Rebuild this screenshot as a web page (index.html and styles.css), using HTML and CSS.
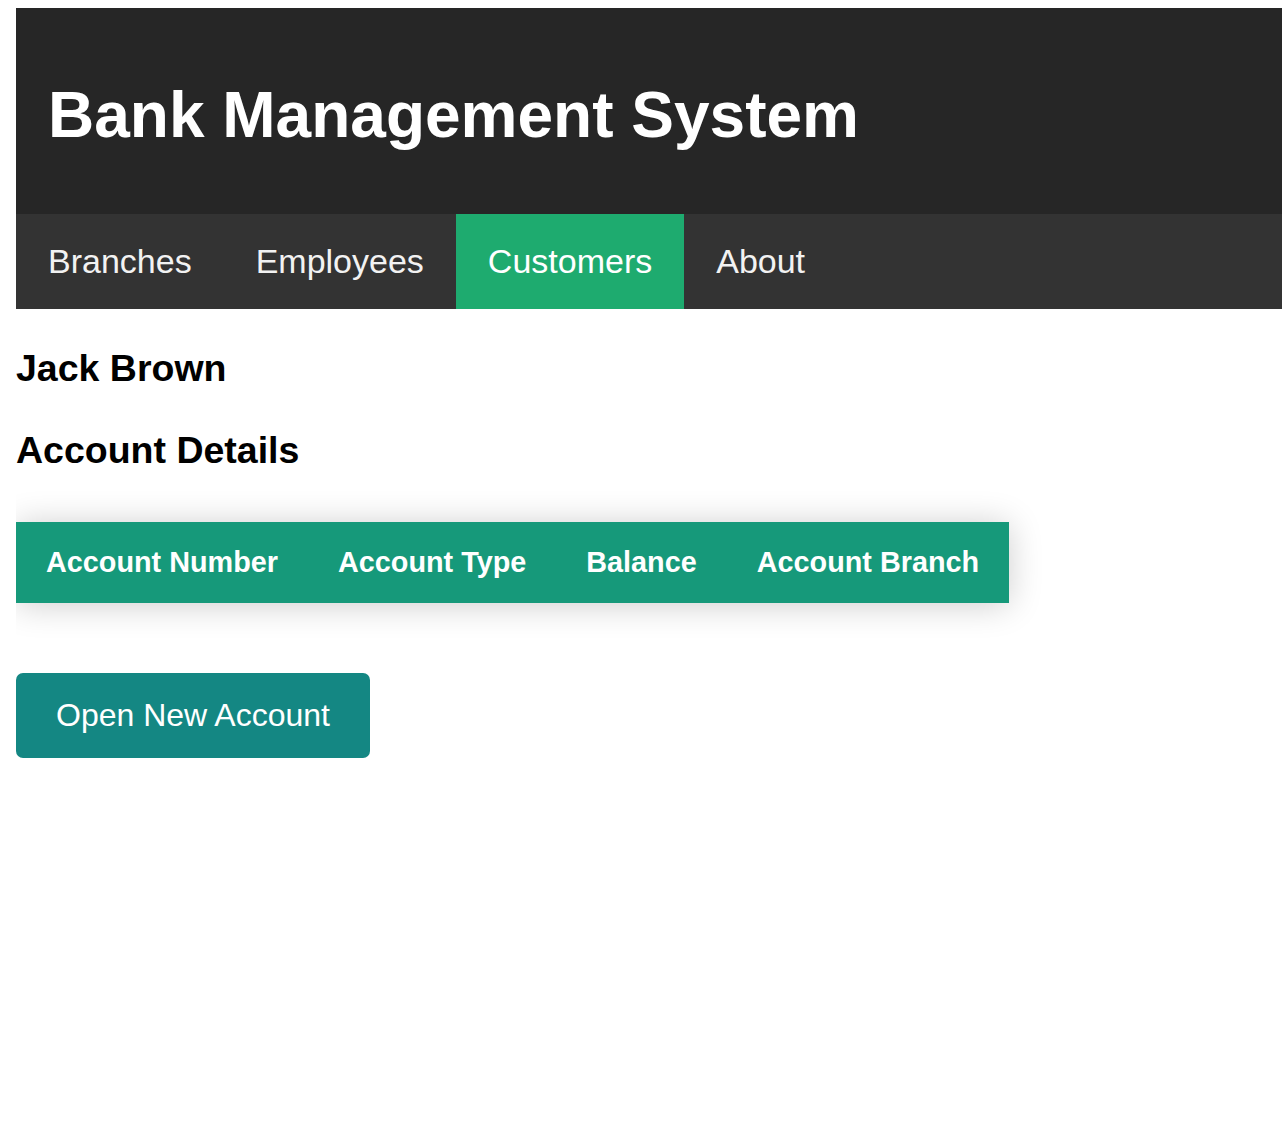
FILE: index.html
```html
<!DOCTYPE html>
<html lang="en">
<head>
<meta charset="utf-8">
<title>Bank Management System</title>
<link rel="stylesheet" href="styles.css">
</head>
<body>
  <header class="site-header">
    <h1 class="site-title">Bank Management System</h1>
  </header>
  <nav class="main-nav">
    <a class="nav-link" href="#">Branches</a>
    <a class="nav-link" href="#">Employees</a>
    <a class="nav-link active" href="#">Customers</a>
    <a class="nav-link" href="#">About</a>
  </nav>
  <main class="content">
    <h2 class="customer-name">Jack Brown</h2>
    <h2 class="section-title">Account Details</h2>
    <table class="accounts">
      <thead>
        <tr>
          <th>Account Number</th>
          <th>Account Type</th>
          <th>Balance</th>
          <th>Account Branch</th>
        </tr>
      </thead>
    </table>
    <button class="open-btn" type="button">Open New Account</button>
  </main>
</body>
</html>
```
FILE: styles.css
```css
html, body {
  background: #ffffff;
}
body {
  margin: 8px 0 0 16px;
  font-family: "Liberation Sans", Arial, Helvetica, sans-serif;
  color: #000;
}
.site-header {
  background: #262626;
  padding: 70px 32px 62px;
}
.site-title {
  margin: 0;
  color: #ffffff;
  font-size: 64px;
  font-weight: 700;
  line-height: 74px;
}
.main-nav {
  display: flex;
  background: #333333;
}
.nav-link {
  display: block;
  padding: 28px 32px;
  font-size: 34px;
  line-height: 39px;
  color: #f2f2f2;
  text-decoration: none;
}
.nav-link.active {
  background: #1eab6f;
  color: #ffffff;
}
.content {
  display: flex;
  flex-direction: column;
  align-items: flex-start;
}
.customer-name,
.section-title {
  margin: 0;
  font-size: 37.5px;
  font-weight: 700;
  line-height: 42px;
}
.customer-name {
  margin-top: 38px;
}
.section-title {
  margin-top: 40px;
}
.accounts {
  margin-top: 51px;
  border-collapse: collapse;
  background: #16997a;
  box-shadow: 0 2px 34px rgba(0, 0, 0, 0.2);
}
.accounts th {
  padding: 24px 30px;
  font-size: 28.8px;
  line-height: 33px;
  font-weight: 700;
  color: #ffffff;
  text-align: left;
  white-space: nowrap;
}
.open-btn {
  margin-top: 70px;
  padding: 24px 40px;
  border: none;
  border-radius: 7px;
  background: #148783;
  color: #ffffff;
  font-family: inherit;
  font-size: 32px;
  line-height: 37px;
  cursor: pointer;
}
```
